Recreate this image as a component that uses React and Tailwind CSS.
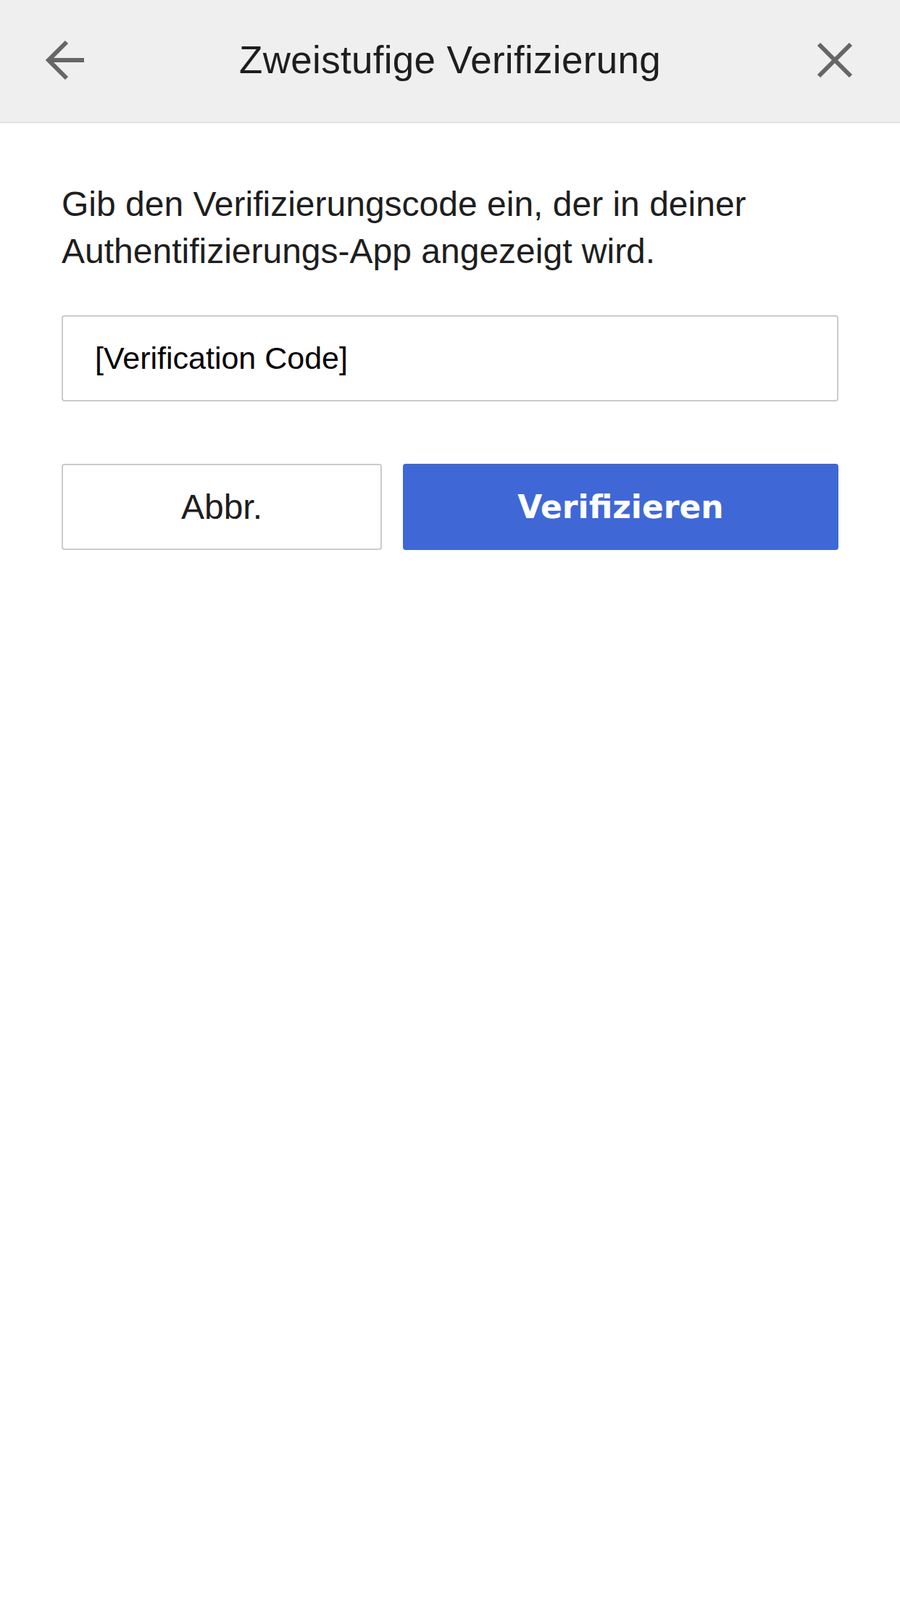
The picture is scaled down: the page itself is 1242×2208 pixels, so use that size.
import React, { useState } from 'react';

function BackIcon() {
  return (
    <svg viewBox="0 0 60 60" className="w-[60px] h-[60px]" fill="none" stroke="#666666" strokeWidth="6">
      <path d="M56 30H7" />
      <path d="M32 5L7 30l25 25" />
    </svg>
  );
}

function CloseIcon() {
  return (
    <svg viewBox="0 0 60 60" className="w-[60px] h-[60px]" fill="none" stroke="#666666" strokeWidth="6">
      <path d="M8 8L52 52" />
      <path d="M52 8L8 52" />
    </svg>
  );
}

export default function App() {
  const [code, setCode] = useState('');

  return (
    <div className="w-[1242px] min-h-[2208px] bg-white" style={{ fontFamily: '"Liberation Sans", Arial, sans-serif' }}>
      <div className="h-[170px] bg-[#efefef] border-b-2 border-[#e2e2e2] flex items-center justify-between px-[60px] pb-[3px]">
        <button className="w-[60px] h-[60px] flex items-center justify-center"><BackIcon /></button>
        <h1 className="text-[53px] text-[#1e1e1e] tracking-[0.3px]">Zweistufige Verifizierung</h1>
        <button className="w-[60px] h-[60px] flex items-center justify-center"><CloseIcon /></button>
      </div>

      <div className="px-[85px] pt-[79px]">
        <p className="text-[48px] leading-[65px] text-[#1e1e1e]">
          Gib den Verifizierungscode ein, der in deiner Authentifizierungs-App angezeigt wird.
        </p>

        <input
          type="text"
          value={code}
          onChange={(e) => setCode(e.target.value)}
          placeholder="[Verification Code]"
          className="mt-[56px] w-full h-[119px] border-2 border-[#cbcbcb] rounded-[4px] px-[44px] text-[43px] text-black placeholder:text-black outline-none"
        />

        <div className="mt-[86px] flex gap-[29px]">
          <button className="w-[442px] h-[119px] border-2 border-[#cbcbcb] rounded-[4px] bg-white text-[48px] text-[#1e1e1e]">
            Abbr.
          </button>
          <button
            className="flex-1 h-[119px] rounded-[4px] bg-[#3f68d6] text-white text-[44px] font-bold"
            style={{ fontFamily: '"DejaVu Sans", Verdana, sans-serif' }}
          >
            Verifizieren
          </button>
        </div>
      </div>
    </div>
  );
}
